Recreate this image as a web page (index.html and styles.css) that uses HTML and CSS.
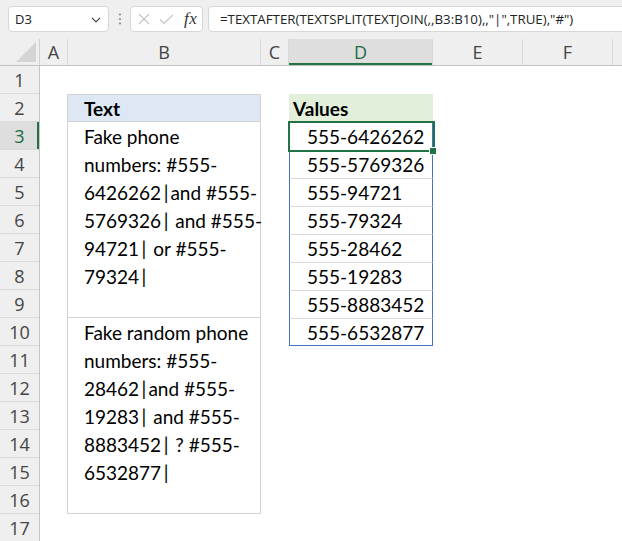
FILE: index.html
```html
<!DOCTYPE html>
<html>
<head>
<meta charset="utf-8">
<title>Sheet</title>
<link rel="stylesheet" href="styles.css">
</head>
<body>
<div class="app">
  <div class="toolbar">
    <div class="namebox">
      <span class="nb-text">D3</span>
      <svg class="chev" width="10" height="6" viewBox="0 0 10 6"><path d="M1 0.8 L5 4.8 L9 0.8" fill="none" stroke="#444" stroke-width="1.2"/></svg>
    </div>
    <div class="vdots">
      <svg width="4" height="12" viewBox="0 0 4 12"><circle cx="2" cy="1.5" r="1.1" fill="#8a8a8a"/><circle cx="2" cy="6" r="1.1" fill="#8a8a8a"/><circle cx="2" cy="10.5" r="1.1" fill="#8a8a8a"/></svg>
    </div>
    <div class="fxbox">
      <svg class="ico-x" width="12" height="12" viewBox="0 0 12 12"><path d="M1 1 L11 11 M11 1 L1 11" stroke="#c3c3c3" stroke-width="1.1" fill="none"/></svg>
      <svg class="ico-ok" width="15" height="11" viewBox="0 0 15 11"><path d="M1 5.5 L5 9.5 L14 0.8" stroke="#c3c3c3" stroke-width="1.1" fill="none"/></svg>
      <span class="fx">fx</span>
    </div>
    <div class="formula">=TEXTAFTER(TEXTSPLIT(TEXTJOIN(,,B3:B10),,"|",TRUE),"#")</div>
  </div>

  <div class="colheads">
    <div class="corner">
      <svg width="20" height="20" viewBox="0 0 20 20"><path d="M20 0 L20 20 L0 20 Z" fill="#d4d4d4"/></svg>
    </div>
    <div class="ch w-a">A</div>
    <div class="ch w-b">B</div>
    <div class="ch w-c">C</div>
    <div class="ch w-d active">D</div>
    <div class="ch w-e">E</div>
    <div class="ch w-f">F</div>
    <div class="ch w-g"></div>
  </div>

  <div class="body">
    <div class="rowheads">
      <div class="rh">1</div>
      <div class="rh">2</div>
      <div class="rh active">3</div>
      <div class="rh">4</div>
      <div class="rh">5</div>
      <div class="rh">6</div>
      <div class="rh">7</div>
      <div class="rh">8</div>
      <div class="rh">9</div>
      <div class="rh">10</div>
      <div class="rh">11</div>
      <div class="rh">12</div>
      <div class="rh">13</div>
      <div class="rh">14</div>
      <div class="rh">15</div>
      <div class="rh">16</div>
      <div class="rh">17</div>
    </div>

    <div class="sheet">
      <div class="b-head">Text</div>
      <div class="b-text t1">Fake phone<br>numbers: #555-<br>6426262<span class="bar">|</span>and #555-<br>5769326<span class="bar">|</span> and #555-<br>94721<span class="bar">|</span> or #555-<br>79324<span class="bar">|</span></div>
      <div class="b-text t2">Fake random phone<br>numbers: #555-<br>28462<span class="bar">|</span>and #555-<br>19283<span class="bar">|</span> and #555-<br>8883452<span class="bar">|</span> ? #555-<br>6532877<span class="bar">|</span></div>

      <div class="d-head">Values</div>
      <div class="dlist">
        <div class="dv sel">555-6426262</div>
        <div class="dv">555-5769326</div>
        <div class="dv">555-94721</div>
        <div class="dv">555-79324</div>
        <div class="dv">555-28462</div>
        <div class="dv">555-19283</div>
        <div class="dv">555-8883452</div>
        <div class="dv">555-6532877</div>
      </div>
    </div>
  </div>
</div>
</body>
</html>
```

FILE: styles.css
```css
* { box-sizing: border-box; }

html, body {
  margin: 0;
  padding: 0;
  background: #ffffff;
  overflow: hidden;
}

.app {
  width: 622px;
  height: 541px;
  overflow: hidden;
  font-family: "Open Sans", "Noto Sans", sans-serif;
  color: #222;
}

/* ---------- toolbar ---------- */
.toolbar {
  height: 39px;
  background: #efefef;
  display: flex;
  align-items: flex-start;
  padding-top: 6px;
  padding-left: 8px;
}

.namebox {
  width: 101px;
  height: 26px;
  background: #fff;
  border: 1px solid #d6d6d6;
  border-radius: 4px;
  display: flex;
  align-items: center;
  justify-content: space-between;
  padding: 0 7px 0 6px;
  font-size: 13px;
  color: #222;
}

.chev { margin-top: 1px; }

.vdots {
  width: 21px;
  height: 26px;
  display: flex;
  align-items: center;
  justify-content: center;
}

.fxbox {
  width: 73px;
  height: 26px;
  background: #fff;
  border: 1px solid #d6d6d6;
  border-radius: 4px;
  display: flex;
  align-items: center;
  padding-left: 7px;
}

.ico-x { margin-right: 9px; }
.ico-ok { margin-right: 10px; margin-top: 1px; }

.fx {
  font-family: "Liberation Serif", "DejaVu Serif", serif;
  font-style: italic;
  font-size: 17px;
  color: #333;
  letter-spacing: 0.5px;
}

.formula {
  flex: 1;
  margin-left: 5px;
  margin-right: -10px;
  height: 26px;
  background: #fff;
  border: 1px solid #d6d6d6;
  border-radius: 4px 0 0 4px;
  padding-left: 11px;
  font-size: 13.3px;
  line-height: 24px;
  white-space: nowrap;
  color: #222;
}

/* ---------- column headers ---------- */
.colheads {
  display: flex;
  height: 27px;
  background: #efefef;
  border-bottom: 1px solid #c2c2c2;
}

.corner {
  width: 40px;
  border-right: 1px solid #d0d0d0;
  display: flex;
  align-items: flex-end;
  justify-content: flex-end;
  padding: 0 3px 3px 0;
}

.ch {
  border-right: 1px solid #d8d8d8;
  display: flex;
  align-items: center;
  justify-content: center;
  font-size: 18px;
  color: #444;
}

.w-a { width: 28px; }
.w-b { width: 193px; }
.w-c { width: 28px; }
.w-d { width: 144px; }
.w-e { width: 90px; }
.w-f { width: 90px; }
.w-g { flex: 1; border-right: none; }

.ch.active {
  background: #dedede;
  color: #1e6b41;
  box-shadow: inset 0 -2px 0 #217346;
}

/* ---------- body ---------- */
.body {
  display: flex;
}

.rowheads {
  width: 40px;
  flex: none;
  background: #efefef;
  border-right: 1px solid #c6c6c6;
}

.rh {
  height: 28px;
  border-bottom: 1px solid #dadada;
  display: flex;
  align-items: center;
  justify-content: center;
  font-size: 18px;
  color: #444;
}

.rh.active {
  background: #dedede;
  color: #1e6b41;
  box-shadow: inset -2px 0 0 #217346;
}

.sheet {
  flex: 1;
  display: grid;
  grid-template-columns: 27px 194px 28px 144px 90px 90px 1fr;
  grid-template-rows: repeat(17, 28px);
  font-family: "Lato", "Open Sans", sans-serif;
  font-size: 19px;
  line-height: 27px;
  color: #000;
}

.b-head {
  grid-column: 2;
  grid-row: 2;
  background: #dde8f4;
  border: 1px solid #d2d2d2;
  border-bottom: none;
  padding-left: 16px;
  font-weight: bold;
}

.b-text {
  grid-column: 2;
  border: 1px solid #d2d2d2;
  border-bottom: none;
  padding-left: 16px;
  white-space: nowrap;
  line-height: 28px;
  margin-top: -1px;
  padding-top: 1px;
}

.bar {
  padding: 0 2px 0 2.5px;
}

.b-text.t1 { grid-row: 3 / span 7; }
.b-text.t2 { grid-row: 10 / span 7; border-bottom: 1px solid #d2d2d2; }

.d-head {
  grid-column: 4;
  grid-row: 2;
  background: #e2efda;
  padding-left: 4px;
  padding-top: 1px;
  font-weight: bold;
}

.dlist {
  grid-column: 4;
  grid-row: 3 / span 8;
  display: grid;
  grid-template-rows: repeat(8, 28px);
}

.dv {
  border-left: 1px solid #4472c4;
  border-right: 1px solid #4472c4;
  border-top: 1px solid #dadada;
  padding-left: 17px;
  white-space: nowrap;
}

.dv:first-child { border-top-color: #4472c4; }
.dv:last-child { border-bottom: 1px solid #4472c4; }

.dv.sel { position: relative; }

.dv.sel::before {
  content: "";
  position: absolute;
  left: -2px;
  right: -3px;
  top: -2px;
  bottom: -2px;
  border: 2px solid #217346;
}

.dv.sel::after {
  content: "";
  position: absolute;
  right: -4px;
  bottom: -4px;
  width: 6px;
  height: 6px;
  background: #217346;
  box-shadow: 0 0 0 1px #fff;
}
```
